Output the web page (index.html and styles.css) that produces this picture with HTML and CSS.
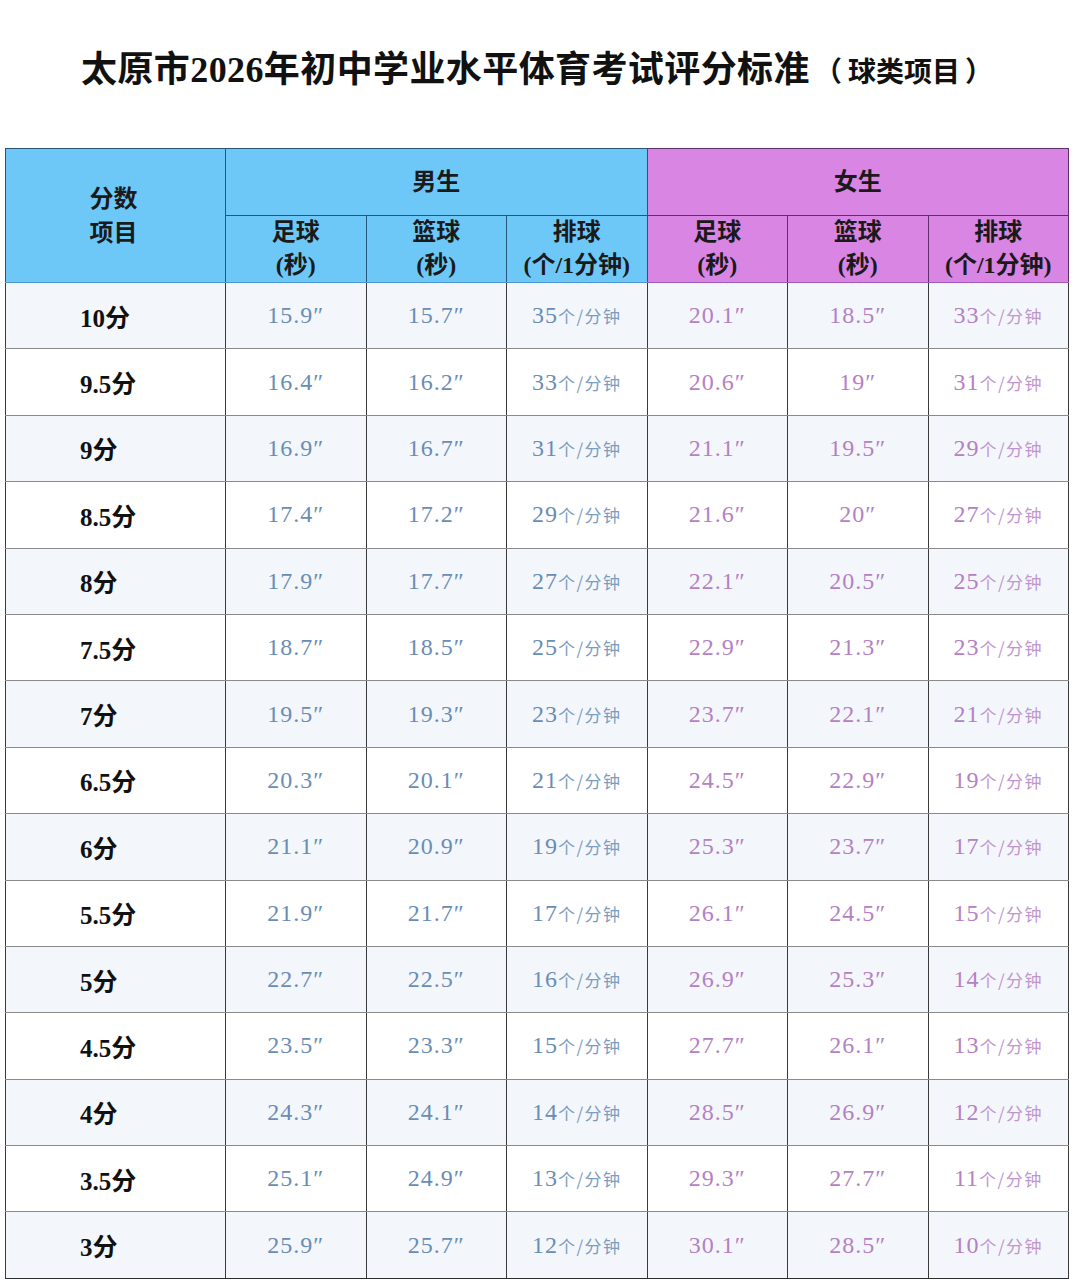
FILE: index.html
```html
<!DOCTYPE html>
<html lang="zh-CN">
<head>
<meta charset="utf-8">
<title>太原市2026年初中学业水平体育考试评分标准</title>
<link rel="stylesheet" href="styles.css">
</head>
<body>
<h1 class="title">太原市2026年初中学业水平体育考试评分标准<span class="sub">（<span class="sub-text">球类项目</span>）</span></h1>
<table class="score">
  <colgroup>
    <col class="c-label"><col class="c-val"><col class="c-val"><col class="c-val"><col class="c-val"><col class="c-val"><col class="c-val">
  </colgroup>
  <thead>
    <tr class="h1row">
      <th rowspan="2" class="blue corner"><div>分数</div><div>项目</div></th>
      <th colspan="3" class="blue">男生</th>
      <th colspan="3" class="purple">女生</th>
    </tr>
    <tr class="h2row">
      <th class="blue"><div>足球</div><div>(秒)</div></th>
      <th class="blue"><div>篮球</div><div>(秒)</div></th>
      <th class="blue"><div>排球</div><div>(个/1分钟)</div></th>
      <th class="purple"><div>足球</div><div>(秒)</div></th>
      <th class="purple"><div>篮球</div><div>(秒)</div></th>
      <th class="purple"><div>排球</div><div>(个/1分钟)</div></th>
    </tr>
  </thead>
  <tbody>
    <tr><th>10分</th><td class="b">15.9″</td><td class="b">15.7″</td><td class="b">35<small>个/分钟</small></td><td class="p">20.1″</td><td class="p">18.5″</td><td class="p">33<small>个/分钟</small></td></tr>
    <tr><th>9.5分</th><td class="b">16.4″</td><td class="b">16.2″</td><td class="b">33<small>个/分钟</small></td><td class="p">20.6″</td><td class="p">19″</td><td class="p">31<small>个/分钟</small></td></tr>
    <tr><th>9分</th><td class="b">16.9″</td><td class="b">16.7″</td><td class="b">31<small>个/分钟</small></td><td class="p">21.1″</td><td class="p">19.5″</td><td class="p">29<small>个/分钟</small></td></tr>
    <tr><th>8.5分</th><td class="b">17.4″</td><td class="b">17.2″</td><td class="b">29<small>个/分钟</small></td><td class="p">21.6″</td><td class="p">20″</td><td class="p">27<small>个/分钟</small></td></tr>
    <tr><th>8分</th><td class="b">17.9″</td><td class="b">17.7″</td><td class="b">27<small>个/分钟</small></td><td class="p">22.1″</td><td class="p">20.5″</td><td class="p">25<small>个/分钟</small></td></tr>
    <tr><th>7.5分</th><td class="b">18.7″</td><td class="b">18.5″</td><td class="b">25<small>个/分钟</small></td><td class="p">22.9″</td><td class="p">21.3″</td><td class="p">23<small>个/分钟</small></td></tr>
    <tr><th>7分</th><td class="b">19.5″</td><td class="b">19.3″</td><td class="b">23<small>个/分钟</small></td><td class="p">23.7″</td><td class="p">22.1″</td><td class="p">21<small>个/分钟</small></td></tr>
    <tr><th>6.5分</th><td class="b">20.3″</td><td class="b">20.1″</td><td class="b">21<small>个/分钟</small></td><td class="p">24.5″</td><td class="p">22.9″</td><td class="p">19<small>个/分钟</small></td></tr>
    <tr><th>6分</th><td class="b">21.1″</td><td class="b">20.9″</td><td class="b">19<small>个/分钟</small></td><td class="p">25.3″</td><td class="p">23.7″</td><td class="p">17<small>个/分钟</small></td></tr>
    <tr><th>5.5分</th><td class="b">21.9″</td><td class="b">21.7″</td><td class="b">17<small>个/分钟</small></td><td class="p">26.1″</td><td class="p">24.5″</td><td class="p">15<small>个/分钟</small></td></tr>
    <tr><th>5分</th><td class="b">22.7″</td><td class="b">22.5″</td><td class="b">16<small>个/分钟</small></td><td class="p">26.9″</td><td class="p">25.3″</td><td class="p">14<small>个/分钟</small></td></tr>
    <tr><th>4.5分</th><td class="b">23.5″</td><td class="b">23.3″</td><td class="b">15<small>个/分钟</small></td><td class="p">27.7″</td><td class="p">26.1″</td><td class="p">13<small>个/分钟</small></td></tr>
    <tr><th>4分</th><td class="b">24.3″</td><td class="b">24.1″</td><td class="b">14<small>个/分钟</small></td><td class="p">28.5″</td><td class="p">26.9″</td><td class="p">12<small>个/分钟</small></td></tr>
    <tr><th>3.5分</th><td class="b">25.1″</td><td class="b">24.9″</td><td class="b">13<small>个/分钟</small></td><td class="p">29.3″</td><td class="p">27.7″</td><td class="p">11<small>个/分钟</small></td></tr>
    <tr><th>3分</th><td class="b">25.9″</td><td class="b">25.7″</td><td class="b">12<small>个/分钟</small></td><td class="p">30.1″</td><td class="p">28.5″</td><td class="p">10<small>个/分钟</small></td></tr>
  </tbody>
</table>
</body>
</html>
```
FILE: styles.css
```css
html, body {
  margin: 0;
  padding: 0;
  background: #ffffff;
}
body {
  font-family: "Liberation Serif", "Noto Sans CJK SC", serif;
  color: #111;
}
.title {
  margin: 0;
  padding-top: 45px;
  height: 148px;
  box-sizing: border-box;
  line-height: 50px;
  text-align: center;
  font-size: 36px;
  font-weight: 700;
  letter-spacing: 0.4px;
  color: #111;
  white-space: nowrap;
}
.title .sub {
  font-size: 28px;
  letter-spacing: 0;
  padding-left: 4px;
}
.title .sub-text {
  padding: 0 5px 0 6px;
}
.score {
  margin: 0 0 0 5px;
  width: 1063px;
  border-collapse: collapse;
  table-layout: fixed;
  border: 1.5px solid #2c2c2c;
}
.c-label { width: 220px; }
.c-val { width: 140.5px; }
.score th, .score td {
  padding: 0;
  text-align: center;
  vertical-align: middle;
}
.score thead th {
  font-weight: 700;
  font-size: 24px;
  line-height: 33px;
  color: #1a1a1a;
}
.score thead th.blue {
  background: #6dc8f8;
  border: 1px solid #25557d;
}
.score thead th.purple {
  background: #d985e3;
  border: 1px solid #5d2f6c;
}
.score thead th.corner {
  line-height: 34px;
  padding-right: 4px;
  border-bottom: 1.5px solid #4d98cf;
}
.h1row { height: 67px; }
.h2row { height: 67px; }
.score .h2row th.blue { border-bottom: 1.5px solid #4d98cf; }
.score .h2row th.purple { border-bottom: 1.5px solid #a45ab8; }
.score tbody tr { height: 66.4px; }
.score tbody tr:nth-child(odd) { background: #f3f7fb; }
.score tbody tr:nth-child(even) { background: #ffffff; }
.score tbody th {
  text-align: left;
  padding-left: 74px;
  font-size: 25px;
  font-weight: 700;
  color: #111;
  border: 1px solid #3a3a3a;
  border-bottom: 1.5px solid #8a8a8a;
}
.score tbody td {
  font-size: 24px;
  font-weight: 400;
  letter-spacing: 1px;
  border-left: 1px solid #3a3a3a;
  border-right: 1px solid #3a3a3a;
  border-bottom: 1.5px solid #8a8a8a;
}
.score tbody tr:last-child th, .score tbody tr:last-child td {
  border-bottom: 1.5px solid #2c2c2c;
}
td.b { color: #6a8db5; }
td.p { color: #b481c4; }
td small {
  font-family: "Noto Sans CJK SC", sans-serif;
  font-size: 17px;
  letter-spacing: 1.5px;
  font-weight: 400;
}
td.b small { color: #7c9cc0; }
td.p small { color: #c195cf; }
```
